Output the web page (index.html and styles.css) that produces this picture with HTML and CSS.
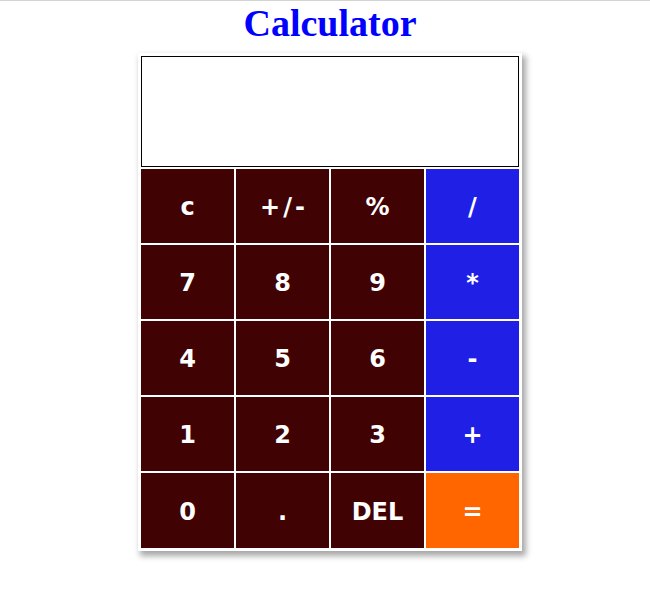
FILE: index.html
```html
<!DOCTYPE html>
<html>
<head>
<meta charset="utf-8">
<link rel="stylesheet" href="styles.css">
</head>
<body>
<h1 class="title">Calculator</h1>
<div class="calc">
  <div class="display"></div>
  <div class="keys">
    <div class="key">c</div>
    <div class="key wide">+/-</div>
    <div class="key">%</div>
    <div class="key op">/</div>
    <div class="key">7</div>
    <div class="key">8</div>
    <div class="key">9</div>
    <div class="key op">*</div>
    <div class="key">4</div>
    <div class="key">5</div>
    <div class="key">6</div>
    <div class="key op">-</div>
    <div class="key">1</div>
    <div class="key">2</div>
    <div class="key">3</div>
    <div class="key op">+</div>
    <div class="key">0</div>
    <div class="key">.</div>
    <div class="key">DEL</div>
    <div class="key eq">=</div>
  </div>
</div>
</body>
</html>
```
FILE: styles.css
```css
html {
  border-top: 1px solid #d3d3d3;
  background: #fff;
}
body {
  margin: 0;
  padding-left: 10px;
  padding-bottom: 20px;
  display: flex;
  flex-direction: column;
  align-items: center;
}
.title {
  margin: 1px 0 9px;
  font-family: "Liberation Serif", "Times New Roman", serif;
  font-weight: bold;
  font-size: 38px;
  line-height: 42px;
  color: #0000ff;
}
.calc {
  width: 378px;
  padding: 3px;
  background: #fff;
  box-shadow: 3px 4px 6px 1px rgba(0, 0, 0, 0.35);
}
.display {
  box-sizing: border-box;
  height: 111px;
  border: 1px solid #000;
  background: #fff;
  margin-bottom: 2px;
}
.keys {
  display: grid;
  grid-template-columns: repeat(4, 93px);
  grid-template-rows: repeat(4, 74px) 75px;
  gap: 2px;
}
.key {
  background: #400202;
  color: #fff;
  font-family: "DejaVu Sans", Verdana, sans-serif;
  font-weight: bold;
  font-size: 24px;
  padding-top: 2px;
  display: flex;
  align-items: center;
  justify-content: center;
}
.key.wide {
  letter-spacing: 3px;
  text-indent: 3px;
}
.key.op {
  background: #1f1fe6;
}
.key.eq {
  background: #ff6600;
}
```
